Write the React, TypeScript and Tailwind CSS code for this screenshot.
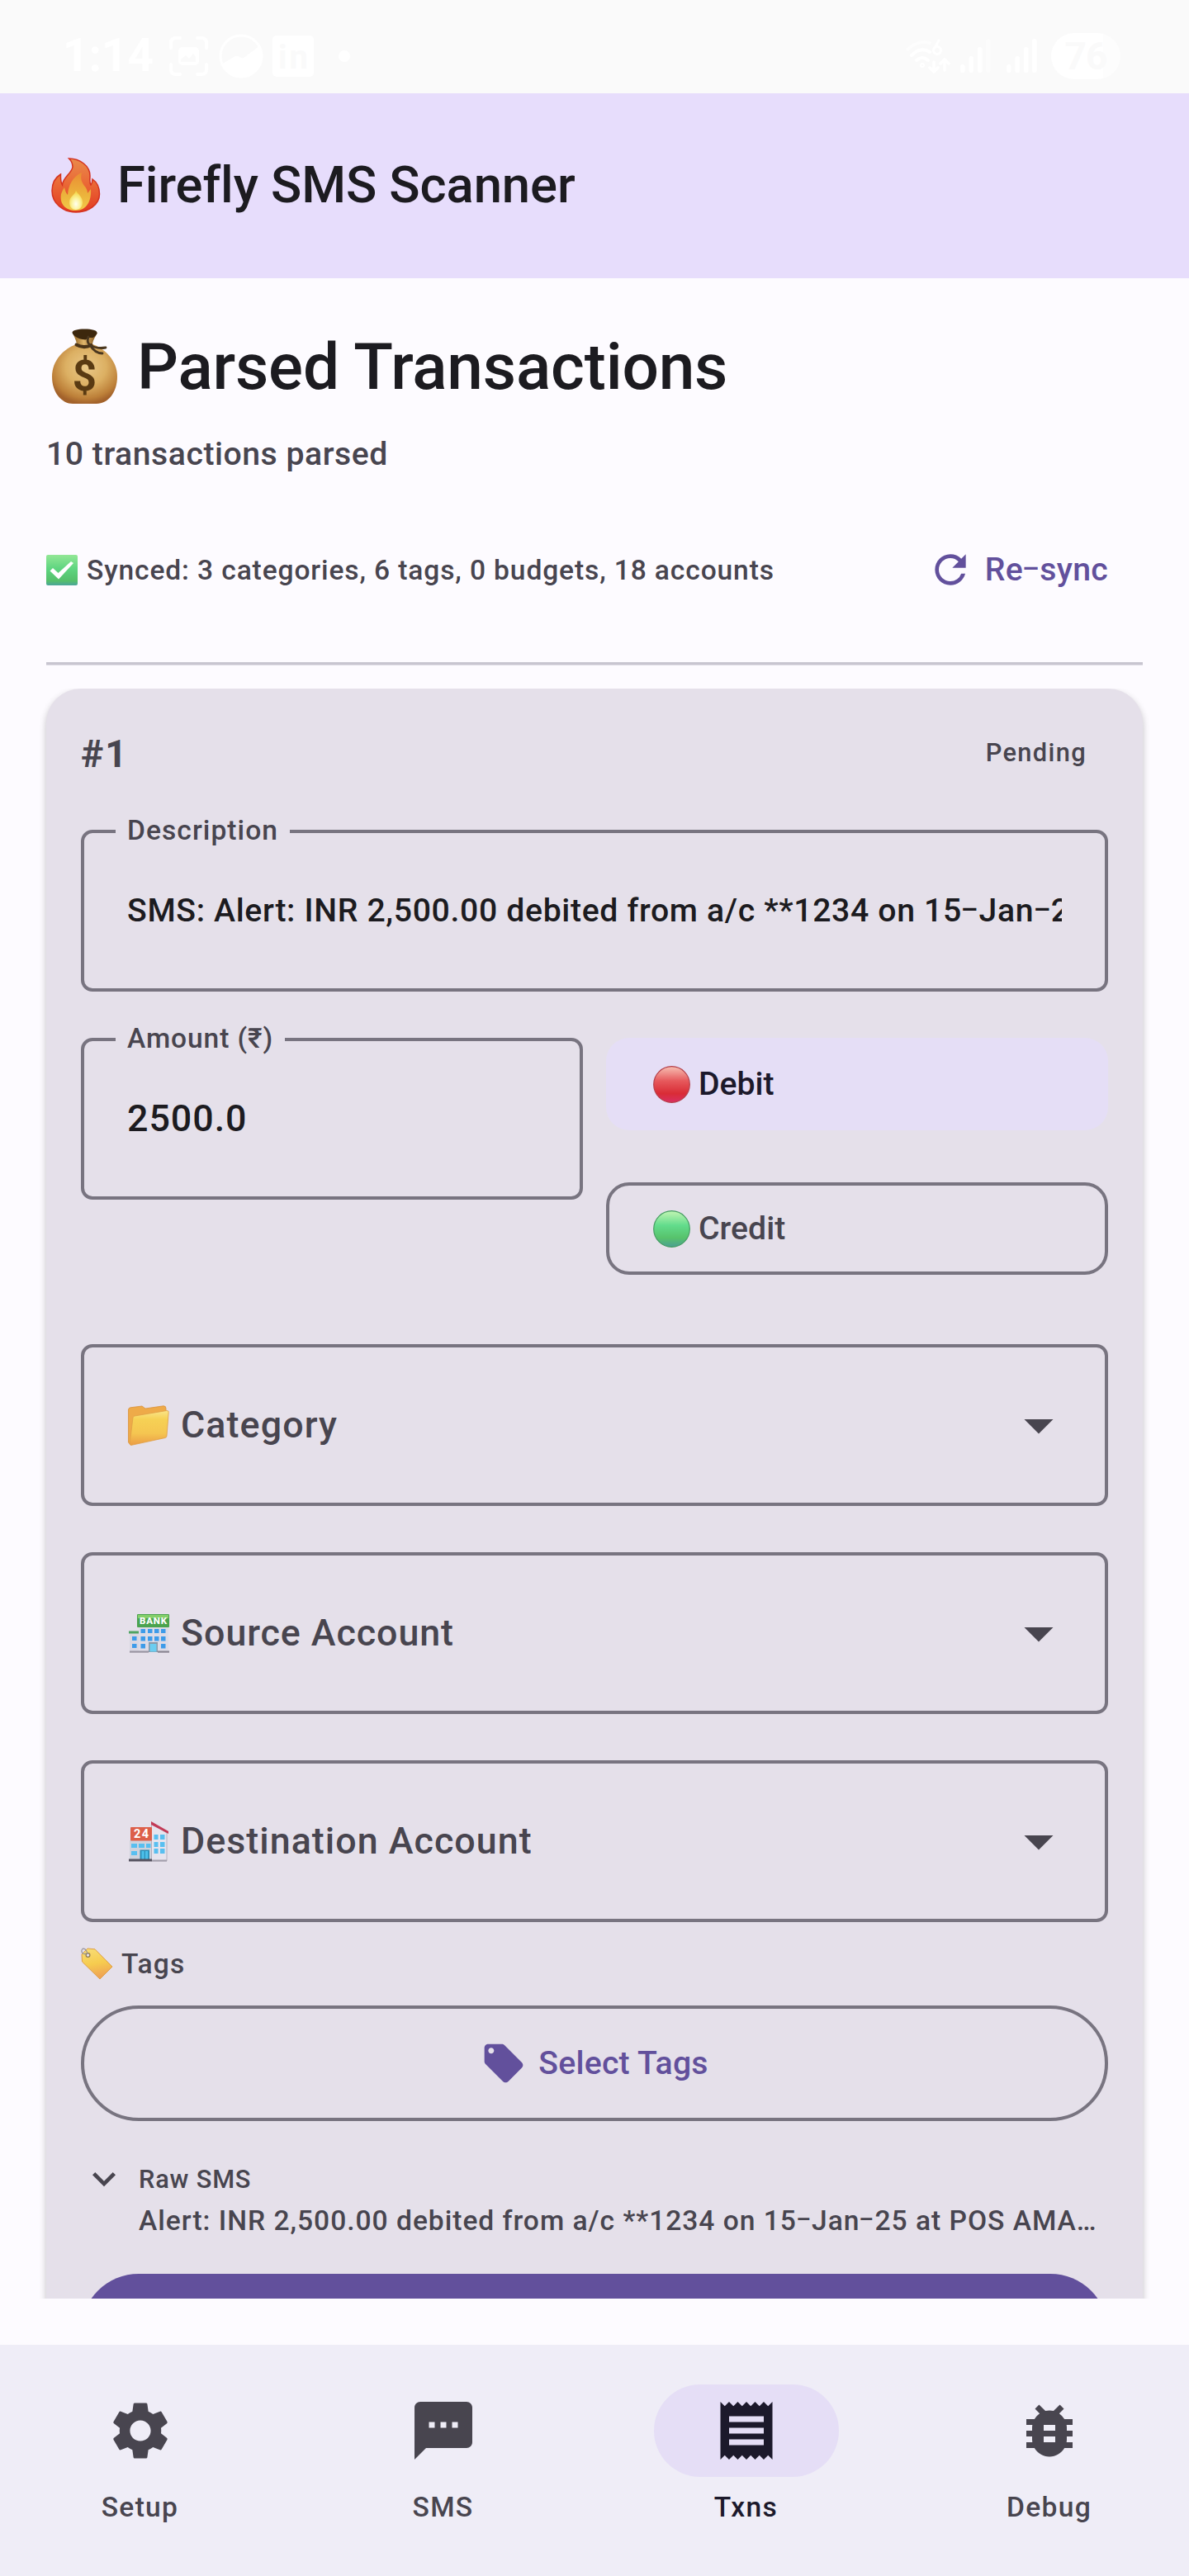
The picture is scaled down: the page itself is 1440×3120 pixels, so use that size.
import type { ReactNode } from "react";
import {
  MdArrowDropDown,
  MdBugReport,
  MdExpandMore,
  MdLocalOffer,
  MdReceipt,
  MdRefresh,
  MdSettings,
  MdSms,
} from "react-icons/md";

/* ---------- status bar ---------- */

function StatusBar() {
  return (
    <div className="flex h-[113px] shrink-0 items-center justify-between bg-[#fafafa] pt-[22px] pr-[83px] pl-[76px] text-white">
      <div className="flex items-center">
        <span className="w-[129px] text-[55px] leading-none font-bold">1:14</span>
        <svg width="47" height="48" viewBox="0 0 47 48" fill="none">
          <path
            d="M2 14V8q0-6 6-6h5M34 2h5q6 0 6 6v6M45 34v6q0 6-6 6h-5M13 46H8q-6 0-6-6v-6"
            stroke="white"
            strokeWidth="4"
            strokeLinecap="round"
          />
          <rect x="11" y="13" width="25" height="22" rx="5" fill="white" />
          <path d="M14 31v-3l6-5 4 4 5-6 3 4v6z" fill="#fafafa" />
        </svg>
        <svg className="ml-[13px]" width="54" height="54" viewBox="0 0 54 54">
          <circle cx="27" cy="27" r="25" fill="none" stroke="white" strokeWidth="3" />
          <path d="M3 37L18 28q4-2 8 0.500q3 2 7-1.500L50 14a26 26 0 0 1-47 23z" fill="white" />
        </svg>
        <svg className="ml-[11px]" width="50" height="50" viewBox="0 0 50 50">
          <rect width="50" height="50" rx="5" fill="white" />
          <text x="7" y="40" fontSize="40" fontWeight="700" textLength="36" fill="#fafafa">
            in
          </text>
        </svg>
        <span className="ml-[30px] size-[14px] rounded-full bg-white" />
      </div>
      <div className="flex items-center">
        <svg width="56" height="42" viewBox="0 0 56 42" fill="none" stroke="white" strokeWidth="4" strokeLinecap="round">
          <path d="M3 13Q16 1 30 5" opacity=".5" />
          <path d="M8 20q11-11 22-4M14 26q7-6 14 0" />
          <circle cx="21" cy="32" r="1" />
          <path d="M35 28v12M30 35l5 5 5-5M48 38V26M43 30l5-5 5 5" strokeWidth="3.5" />
          <path d="M41 2l-5 9" strokeWidth="3" />
          <circle cx="39" cy="14" r="4.5" strokeWidth="3" />
        </svg>
        <svg className="ml-[11px]" width="37" height="42" viewBox="0 0 37 42" fill="white">
          <rect x="0" y="31" width="5.5" height="10" rx="2.5" />
          <rect x="10.5" y="21" width="5.5" height="20" rx="2.5" />
          <rect x="21" y="10" width="5.5" height="31" rx="2.5" />
          <rect x="31" y="0" width="5.5" height="41" rx="2.5" opacity=".4" />
        </svg>
        <svg className="ml-[19px]" width="37" height="42" viewBox="0 0 37 42" fill="white">
          <rect x="0" y="31" width="5.5" height="10" rx="2.5" />
          <rect x="10.5" y="21" width="5.5" height="20" rx="2.5" />
          <rect x="21" y="10" width="5.5" height="31" rx="2.5" />
          <rect x="31" y="0" width="5.5" height="41" rx="2.5" />
        </svg>
        <span className="ml-[17px] flex h-[56px] w-[84px] items-center justify-center rounded-[28px] bg-linear-to-r from-white from-75% to-[#fdfdfd] to-75% text-[46px] leading-none font-bold tracking-[-1px] text-[#fafafa]">
          76
        </span>
      </div>
    </div>
  );
}

/* ---------- emoji artwork ---------- */

function Fire() {
  return (
    <svg width="60" height="67" viewBox="0 0 60 67" className="shrink-0">
      <defs>
        <linearGradient id="fireOuter" x1="0" y1="0" x2="0" y2="1">
          <stop offset="0" stopColor="#e98a4b" />
          <stop offset=".45" stopColor="#ea6a37" />
          <stop offset="1" stopColor="#e23a22" />
        </linearGradient>
        <linearGradient id="fireMid" x1="0" y1="0" x2="0" y2="1">
          <stop offset="0" stopColor="#ea8d33" />
          <stop offset=".6" stopColor="#ecb43c" />
          <stop offset="1" stopColor="#f2c94a" />
        </linearGradient>
        <radialGradient id="fireCore" cx=".5" cy=".7" r=".6">
          <stop offset="0" stopColor="#fffef0" />
          <stop offset=".5" stopColor="#fbf3a0" />
          <stop offset="1" stopColor="#f5d84f" />
        </radialGradient>
      </defs>
      <path
        d="M21.5 1C35 1 47 10 47 22c0 4-1 8 1 11 1.500-2 2-4 2-7 6 4 8.500 11 8.500 18C58.500 57 45 66 30 66S1 56 1 40c0-9 4-16 10.500-20 0 5-.5 9 2 13C14 24 25 19 26 11c0-4-1.500-7-4.500-10z"
        fill="url(#fireOuter)"
        stroke="#d4321f"
        strokeWidth="1.500"
      />
      <path
        d="M37 18c-2 8 0 12 4 17 2 3 3 5 3 8l4-5c1 14-5 26-18 26S10 56 12 44c1-3 2-5 4-8 1 3 1 6 4 9 1-12 6-22 17-27z"
        fill="url(#fireMid)"
      />
      <path d="M30 40c2 4 8 7 8 14 0 6-4 9-8 9s-8-3-8-9c0-7 7-9 8-14z" fill="url(#fireCore)" />
    </svg>
  );
}

function MoneyBag() {
  return (
    <svg width="79" height="92" viewBox="0 0 79 92" className="shrink-0">
      <defs>
        <radialGradient id="bag" cx=".52" cy=".38" r=".62">
          <stop offset="0" stopColor="#e9c888" />
          <stop offset=".5" stopColor="#dcb063" />
          <stop offset=".85" stopColor="#bd8039" />
          <stop offset="1" stopColor="#a3622b" />
        </radialGradient>
        <linearGradient id="bagNeck" x1="0" y1="0" x2="1" y2="0">
          <stop offset="0" stopColor="#8a5c1c" />
          <stop offset=".45" stopColor="#e0b66c" />
          <stop offset="1" stopColor="#7c4f18" />
        </linearGradient>
      </defs>
      <path d="M30 19C14 24 0 39 0 58c0 20 12 33 25 33h29c14 0 25-14 25-33C79 39 64 24 49 19z" fill="url(#bag)" />
      <path d="M25 5c2 6 5 9 5 16h19c0-7 3-10 6-16z" fill="url(#bagNeck)" />
      <path d="M24.500 5c0-3 6-4.500 15-4.500S54.500 2 54.500 5c0 2-3 5-5 6h-5l-4 2.500q-8-.5-13-4.500-3-2.500-3-4z" fill="#3c270d" />
      <path d="M29.500 19.500q9 5 18 .5" fill="none" stroke="#4b3418" strokeWidth="4" strokeLinecap="round" />
      <path
        d="M44 10q-2 6 1 9 8 6 20 4M46 20q6 10 15 10"
        fill="none"
        stroke="#4b3820"
        strokeWidth="2.800"
        strokeLinecap="round"
      />
      <text x="39.500" y="75" textAnchor="middle" fontSize="51" fontWeight="700" fill="#593a12">
        $
      </text>
    </svg>
  );
}

function CheckMark() {
  return (
    <svg width="38" height="37" viewBox="0 0 38 37" className="shrink-0">
      <defs>
        <linearGradient id="chk" x1="0" y1="0" x2="0" y2="1">
          <stop offset="0" stopColor="#93e796" />
          <stop offset=".45" stopColor="#5fd580" />
          <stop offset=".85" stopColor="#55bf6b" />
          <stop offset="1" stopColor="#4ba59b" />
        </linearGradient>
      </defs>
      <rect width="38" height="37" rx="2" fill="url(#chk)" />
      <path d="M4.500 19.500l3.500-3.500 6.500 6L30 8l3 2L15 29.500z" fill="white" />
    </svg>
  );
}

function Ball({ tone }: { tone: "red" | "green" }) {
  const stops =
    tone === "red" ? ["#f5b3a8", "#e6595c", "#d92c36", "#d92f62"] : ["#b7f2ae", "#62dc8c", "#57c26b", "#4a9f94"];
  return (
    <svg width="45" height="45" viewBox="0 0 45 45" className="shrink-0">
      <defs>
        <linearGradient id={tone} x1="0" y1="0" x2="0" y2="1">
          <stop offset=".05" stopColor={stops[0]} />
          <stop offset=".4" stopColor={stops[1]} />
          <stop offset=".75" stopColor={stops[2]} />
          <stop offset="1" stopColor={stops[3]} />
        </linearGradient>
      </defs>
      <circle
        cx="22.500"
        cy="22.500"
        r="21.800"
        fill={`url(#${tone})`}
        stroke={tone === "red" ? "#b5404a" : "#459d62"}
        strokeWidth="1.200"
      />
    </svg>
  );
}

function Folder() {
  return (
    <svg width="50" height="49" viewBox="0 0 50 49" className="shrink-0">
      <defs>
        <linearGradient id="fold" x1="0" y1="0" x2="0" y2="1">
          <stop offset="0" stopColor="#fae58a" />
          <stop offset=".25" stopColor="#f6d155" />
          <stop offset=".65" stopColor="#f5c651" />
          <stop offset="1" stopColor="#eb9c45" />
        </linearGradient>
      </defs>
      <path d="M.5 5Q1 3 3 2.800L17 1l4 3L43 .8q3 0 3 3v6L3 48 .5 45z" fill="#eeaa49" stroke="#d9923c" strokeWidth=".8" />
      <path d="M8 13L47 6.500q2.500 0 2.200 2L47 37q0 2-2 2.500L3.500 48.500Q2 48 2.200 46L6 15q.5-1.800 2-2z" fill="url(#fold)" stroke="#e0a045" strokeWidth=".8" />
    </svg>
  );
}

function Bank() {
  return (
    <svg width="49" height="47" viewBox="0 0 49 47" className="shrink-0">
      <rect x="1" y="22" width="12" height="23" fill="#d9d7e2" />
      <rect x="0" y="20.500" width="13" height="3" fill="#4fa462" />
      <rect x="12" y="15" width="36" height="30" fill="#dddbe6" />
      <rect x="10" y="0" width="39" height="16" rx="1" fill="#4ba34f" />
      <rect x="11" y="1" width="37" height="4" fill="#84cf6a" />
      <text x="29.500" y="12.200" textAnchor="middle" fontSize="11.500" fontWeight="800" textLength="33" fill="white">
        BANK
      </text>
      <g fill="#3d9be9">
        {[14.5, 23, 31, 39].map((x) => (
          <g key={x}>
            <rect x={x} y="18" width="5.500" height="5" />
            <rect x={x} y="27" width="5.500" height="5.500" />
          </g>
        ))}
        <rect x="14.500" y="36" width="5.500" height="5.500" />
        <rect x="39" y="36" width="5.500" height="5.500" />
        <rect x="4" y="27" width="5.500" height="5" />
        <rect x="4" y="36" width="5.500" height="5" />
      </g>
      <rect x="24" y="34" width="11" height="12" fill="#8a98a8" />
      <rect x="25.500" y="36" width="8" height="9.500" fill="#6ccdf0" />
      <rect x="1" y="44.500" width="23" height="2.200" fill="#9a95a2" />
      <rect x="35" y="44.500" width="14" height="2.200" fill="#8a8592" />
    </svg>
  );
}

function Store() {
  return (
    <svg width="48" height="49" viewBox="0 0 48 49" className="shrink-0">
      <rect x="1" y="23" width="27" height="24" fill="#cfd3dd" />
      <path d="M27.500 2L46 14v34H27.500z" fill="#e6e4ee" stroke="#aaa5b2" strokeWidth=".8" />
      <path d="M27 0l21 12v3L27 4z" fill="#c23a56" />
      <rect x="2" y="7" width="26" height="16.500" rx="1" fill="#dd5f49" />
      <text x="15" y="20" textAnchor="middle" fontSize="14.500" fontWeight="700" textLength="18" fill="white">
        24
      </text>
      <g fill="#58bff0">
        {[16, 25, 33].map((y) => (
          <g key={y}>
            <rect x="30.500" y={y} width="5" height="6" />
            <rect x="38" y={y} width="5.500" height="6" />
          </g>
        ))}
        <rect x="3" y="27" width="7" height="5" />
        <rect x="12" y="27" width="7" height="5" />
        <rect x="21" y="27" width="5.500" height="5" />
        <rect x="3" y="36" width="7" height="5" />
      </g>
      <rect x="13.500" y="34.500" width="11.500" height="12" fill="#2e8fb8" />
      <path d="M15.500 36h3.200v10h-3.200zM20 36h3.200v10H20z" fill="#4cc0ea" />
      <rect x="0" y="45.500" width="28" height="3" fill="#55525f" />
      <rect x="28" y="46.500" width="18" height="2" fill="#a39eab" />
    </svg>
  );
}

function TagEmoji() {
  return (
    <svg width="39" height="39" viewBox="0 0 39 39" className="shrink-0">
      <defs>
        <linearGradient id="tagFill" x1="0" y1="0" x2=".2" y2="1">
          <stop offset="0" stopColor="#f8de78" />
          <stop offset=".55" stopColor="#f6cc4f" />
          <stop offset="1" stopColor="#efa354" />
        </linearGradient>
      </defs>
      <path d="M1 8l7-7 9 .8L38 23 23 38 1.500 17z" fill="url(#tagFill)" stroke="#df9f45" strokeWidth="1" strokeLinejoin="round" />
      <circle cx="8.500" cy="9" r="2.400" fill="#e5e0ea" stroke="#8f7a4c" strokeWidth="1.200" />
      <path d="M8 8C7 2 3-.5 1.500 2-.5 5 3 9 6 7" fill="none" stroke="#96949c" strokeWidth="1.200" />
    </svg>
  );
}

/* ---------- text helpers ---------- */

/* A hyphen drawn wider and a little higher than the font's own. */
function Hyphen() {
  return <span className="mx-[0.085em] inline-block -translate-y-[0.07em] scale-x-[1.6] scale-y-90">-</span>;
}

function Hyphenated({ text }: { text: string }) {
  const parts = text.split("-");
  return (
    <>
      {parts.map((part, i) => (
        <span key={i}>
          {i > 0 && <Hyphen />}
          {part}
        </span>
      ))}
    </>
  );
}

/* ---------- form controls ---------- */

function OutlinedField({ label, className, children }: { label: string; className: string; children: ReactNode }) {
  return (
    <div className={`relative flex h-[196px] items-center rounded-[14px] border-4 border-[#787480] px-[52px] ${className}`}>
      <span className="absolute -top-[27px] left-[38px] bg-[#e5e0ea] px-[14px] text-[33.6px] leading-[48px] whitespace-nowrap text-[#48454f]">
        {label}
      </span>
      {children}
    </div>
  );
}

function SelectField({ icon, label, tracking }: { icon: ReactNode; label: string; tracking: string }) {
  return (
    <div className="flex h-[196px] items-center rounded-[14px] border-4 border-[#787480] pr-[38px] pl-[53px] text-[#48454f]">
      <div className="flex w-[50px] justify-center">{icon}</div>
      <span className={`ml-[14px] flex-1 pb-[2px] text-[44.8px] leading-[67px] ${tracking}`}>{label}</span>
      <MdArrowDropDown size={84} />
    </div>
  );
}

function NavItem({ icon, label, active }: { icon: ReactNode; label: string; active?: boolean }) {
  return (
    <div className={`flex flex-1 flex-col items-center ${active ? "text-[#1c192b]" : "text-[#48454f]"}`}>
      <div className={`flex h-[112px] w-[224px] items-center justify-center rounded-full ${active ? "bg-[#e5def6]" : ""}`}>
        {icon}
      </div>
      <span className="mt-[14px] text-[33.6px] leading-[45px] tracking-[1.3px]">{label}</span>
    </div>
  );
}

/* ---------- transaction card ---------- */

function TransactionCard() {
  return (
    <section className="rounded-t-[42px] bg-[#e5e0ea] px-[42px] pt-[42px] shadow-[0_4px_9px_rgba(0,0,0,0.24)]">
      <div className="flex h-[73px] items-center justify-between text-[#48454f]">
        <span className="text-[46px] leading-none font-bold tracking-[2px]">#1</span>
        <span className="pr-[26px] text-[30.8px] leading-none tracking-[1.35px]">Pending</span>
      </div>

      <OutlinedField label="Description" className="mt-[56px] tracking-[1.05px]">
        <span className="flex-1 overflow-hidden text-[39.2px] leading-[56px] tracking-[0.65px] whitespace-nowrap text-[#1c1b20]">
          <Hyphenated text="SMS: Alert: INR 2,500.00 debited from a/c **1234 on 15-Jan-25" />
        </span>
      </OutlinedField>

      <div className="mt-[56px] grid grid-cols-2 items-start gap-[28px]">
        <OutlinedField label="Amount (₹)" className="tracking-[0.9px]">
          <span className="pb-[2px] text-[44.8px] leading-[67px] tracking-[0.95px] text-[#1c1b20]">2500.0</span>
        </OutlinedField>
        <div className="flex flex-col gap-[63px] text-[39.2px] leading-[56px]">
          <div className="flex h-[112px] items-center gap-[10px] rounded-[28px] bg-[#e5def6] pl-[57px] text-[#1c192b]">
            <Ball tone="red" />
            <span>Debit</span>
          </div>
          <div className="flex h-[112px] items-center gap-[10px] rounded-[28px] border-4 border-[#787480] pl-[53px] text-[#48454f]">
            <Ball tone="green" />
            <span>Credit</span>
          </div>
        </div>
      </div>

      <div className="mt-[84px] flex flex-col gap-[56px]">
        <SelectField icon={<Folder />} label="Category" tracking="tracking-[1.1px]" />
        <SelectField icon={<Bank />} label="Source Account" tracking="tracking-[0.92px]" />
        <SelectField icon={<Store />} label="Destination Account" tracking="tracking-[1.02px]" />
      </div>

      <div className="mt-[28px] flex h-[45px] items-center gap-[10px] text-[33.6px] leading-[45px] tracking-[1.2px] text-[#48454f]">
        <TagEmoji />
        <span>Tags</span>
      </div>

      <div className="mt-[28px] flex h-[140px] items-center justify-center gap-[14px] rounded-full border-4 border-[#787480] text-[39.2px] leading-[56px] tracking-[0.24px] text-[#62509c]">
        <MdLocalOffer size={56} />
        <span>Select Tags</span>
      </div>

      <div className="mt-[42px] flex text-[#48454f]">
        <MdExpandMore size={56} />
        <div className="ml-[14px] flex flex-col pt-[6px]">
          <span className="text-[30.8px] leading-[45px] tracking-[0.8px]">Raw SMS</span>
          <span className="mt-[4px] text-[33.6px] leading-[47px] tracking-[0.98px] whitespace-nowrap">
            <Hyphenated text="Alert: INR 2,500.00 debited from a/c **1234 on 15-Jan-25 at POS AMA…" />
          </span>
        </div>
      </div>

      <div className="mt-[41px] h-[140px] rounded-full bg-[#62509c]" />
    </section>
  );
}

export default function App() {
  return (
    <div className="flex h-[3120px] w-[1440px] flex-col overflow-hidden bg-[#fdfbff] font-['Roboto',sans-serif] font-medium">
      <StatusBar />

      <header className="flex h-[224px] shrink-0 items-center bg-[#e7ddfc] pb-[2px] pl-[62px] text-[#1c1b20]">
        <Fire />
        <h1 className="ml-[20px] text-[61.6px] leading-[78px] tracking-[-0.1px]">Firefly SMS Scanner</h1>
      </header>

      <div className="flex shrink-0 flex-col px-[56px] pt-[56px]">
        <div className="flex h-[101px] items-center pl-[7px] text-[#1c1b20]">
          <MoneyBag />
          <h2 className="ml-[24px] text-[78.4px] leading-[100px] tracking-[-0.2px]">Parsed Transactions</h2>
        </div>
        <p className="mt-[28px] text-[39.2px] leading-[56px] tracking-[0.52px] text-[#48454f]">10 transactions parsed</p>
        <div className="mt-[28px] flex h-[168px] items-center justify-between">
          <div className="flex items-center gap-[11px] text-[33.6px] leading-[45px] tracking-[0.87px] text-[#48454f]">
            <CheckMark />
            <span>Synced: 3 categories, 6 tags, 0 budgets, 18 accounts</span>
          </div>
          <div className="flex items-center gap-[14px] pr-[42px] text-[39.2px] leading-[56px] tracking-[0.28px] text-[#62509c]">
            <MdRefresh size={56} />
            <span>
              <Hyphenated text="Re-sync" />
            </span>
          </div>
        </div>
        <div className="mt-[28px] h-[4px] border-b border-[#e0dde5] bg-[#c8c5d0] bg-clip-padding" />
      </div>

      <main className="mt-[28px] h-[1950px] shrink-0 overflow-hidden px-[56px]">
        <TransactionCard />
      </main>

      <nav className="mt-auto flex h-[280px] shrink-0 gap-[28px] bg-[#efedf7] pt-[48px]">
        <NavItem icon={<MdSettings size={84} />} label="Setup" />
        <NavItem icon={<MdSms size={84} />} label="SMS" />
        <NavItem icon={<MdReceipt size={84} />} label="Txns" active />
        <NavItem icon={<MdBugReport size={84} />} label="Debug" />
      </nav>
    </div>
  );
}
